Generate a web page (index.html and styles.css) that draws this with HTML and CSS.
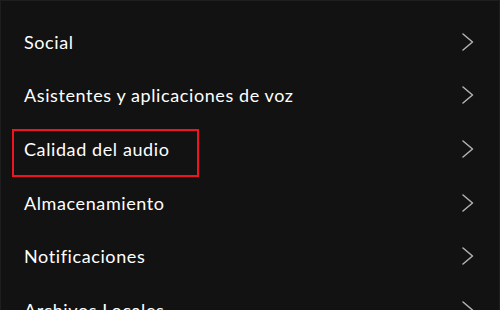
FILE: index.html
```html
<!DOCTYPE html>
<html lang="es">
<head>
<meta charset="utf-8">
<link rel="stylesheet" href="styles.css">
</head>
<body>
<div class="screen">
  <ul class="menu">
    <li class="item"><span class="label">Social</span><svg class="chev" viewBox="0 0 12 18"><path d="M1 1l9.5 8L1 17"/></svg></li>
    <li class="item"><span class="label">Asistentes y aplicaciones de voz</span><svg class="chev" viewBox="0 0 12 18"><path d="M1 1l9.5 8L1 17"/></svg></li>
    <li class="item"><span class="label highlight">Calidad del audio</span><svg class="chev" viewBox="0 0 12 18"><path d="M1 1l9.5 8L1 17"/></svg></li>
    <li class="item"><span class="label">Almacenamiento</span><svg class="chev" viewBox="0 0 12 18"><path d="M1 1l9.5 8L1 17"/></svg></li>
    <li class="item"><span class="label">Notificaciones</span><svg class="chev" viewBox="0 0 12 18"><path d="M1 1l9.5 8L1 17"/></svg></li>
    <li class="item"><span class="label">Archivos Locales</span><svg class="chev" viewBox="0 0 12 18"><path d="M1 1l9.5 8L1 17"/></svg></li>
  </ul>
</div>
</body>
</html>
```
FILE: styles.css
```css
html, body {
  margin: 0;
  padding: 0;
  background: #121212;
}
.screen {
  width: 500px;
  height: 310px;
  box-sizing: border-box;
  overflow: hidden;
  background: #121212;
  border: 1px solid #1e1e1e;
  border-bottom: none;
}
.menu {
  list-style: none;
  margin: 0;
  padding: 14px 0 0 0;
}
.item {
  height: 53.6px;
  display: flex;
  align-items: center;
  justify-content: space-between;
  padding: 0 25px 0 23px;
}
.label {
  font-family: "Lato", "Liberation Sans", sans-serif;
  font-size: 18px;
  color: #ffffff;
  letter-spacing: 0.6px;
}
.label.highlight {
  position: relative;
}
.label.highlight::after {
  content: "";
  position: absolute;
  left: -12px;
  top: -9px;
  width: 187px;
  height: 48px;
  box-sizing: border-box;
  border: 2px solid #f0141e;
}
.chev {
  width: 12px;
  height: 18px;
  fill: none;
  stroke: #b3b3b3;
  stroke-width: 1.5;
  stroke-linecap: round;
  stroke-linejoin: round;
}
```
